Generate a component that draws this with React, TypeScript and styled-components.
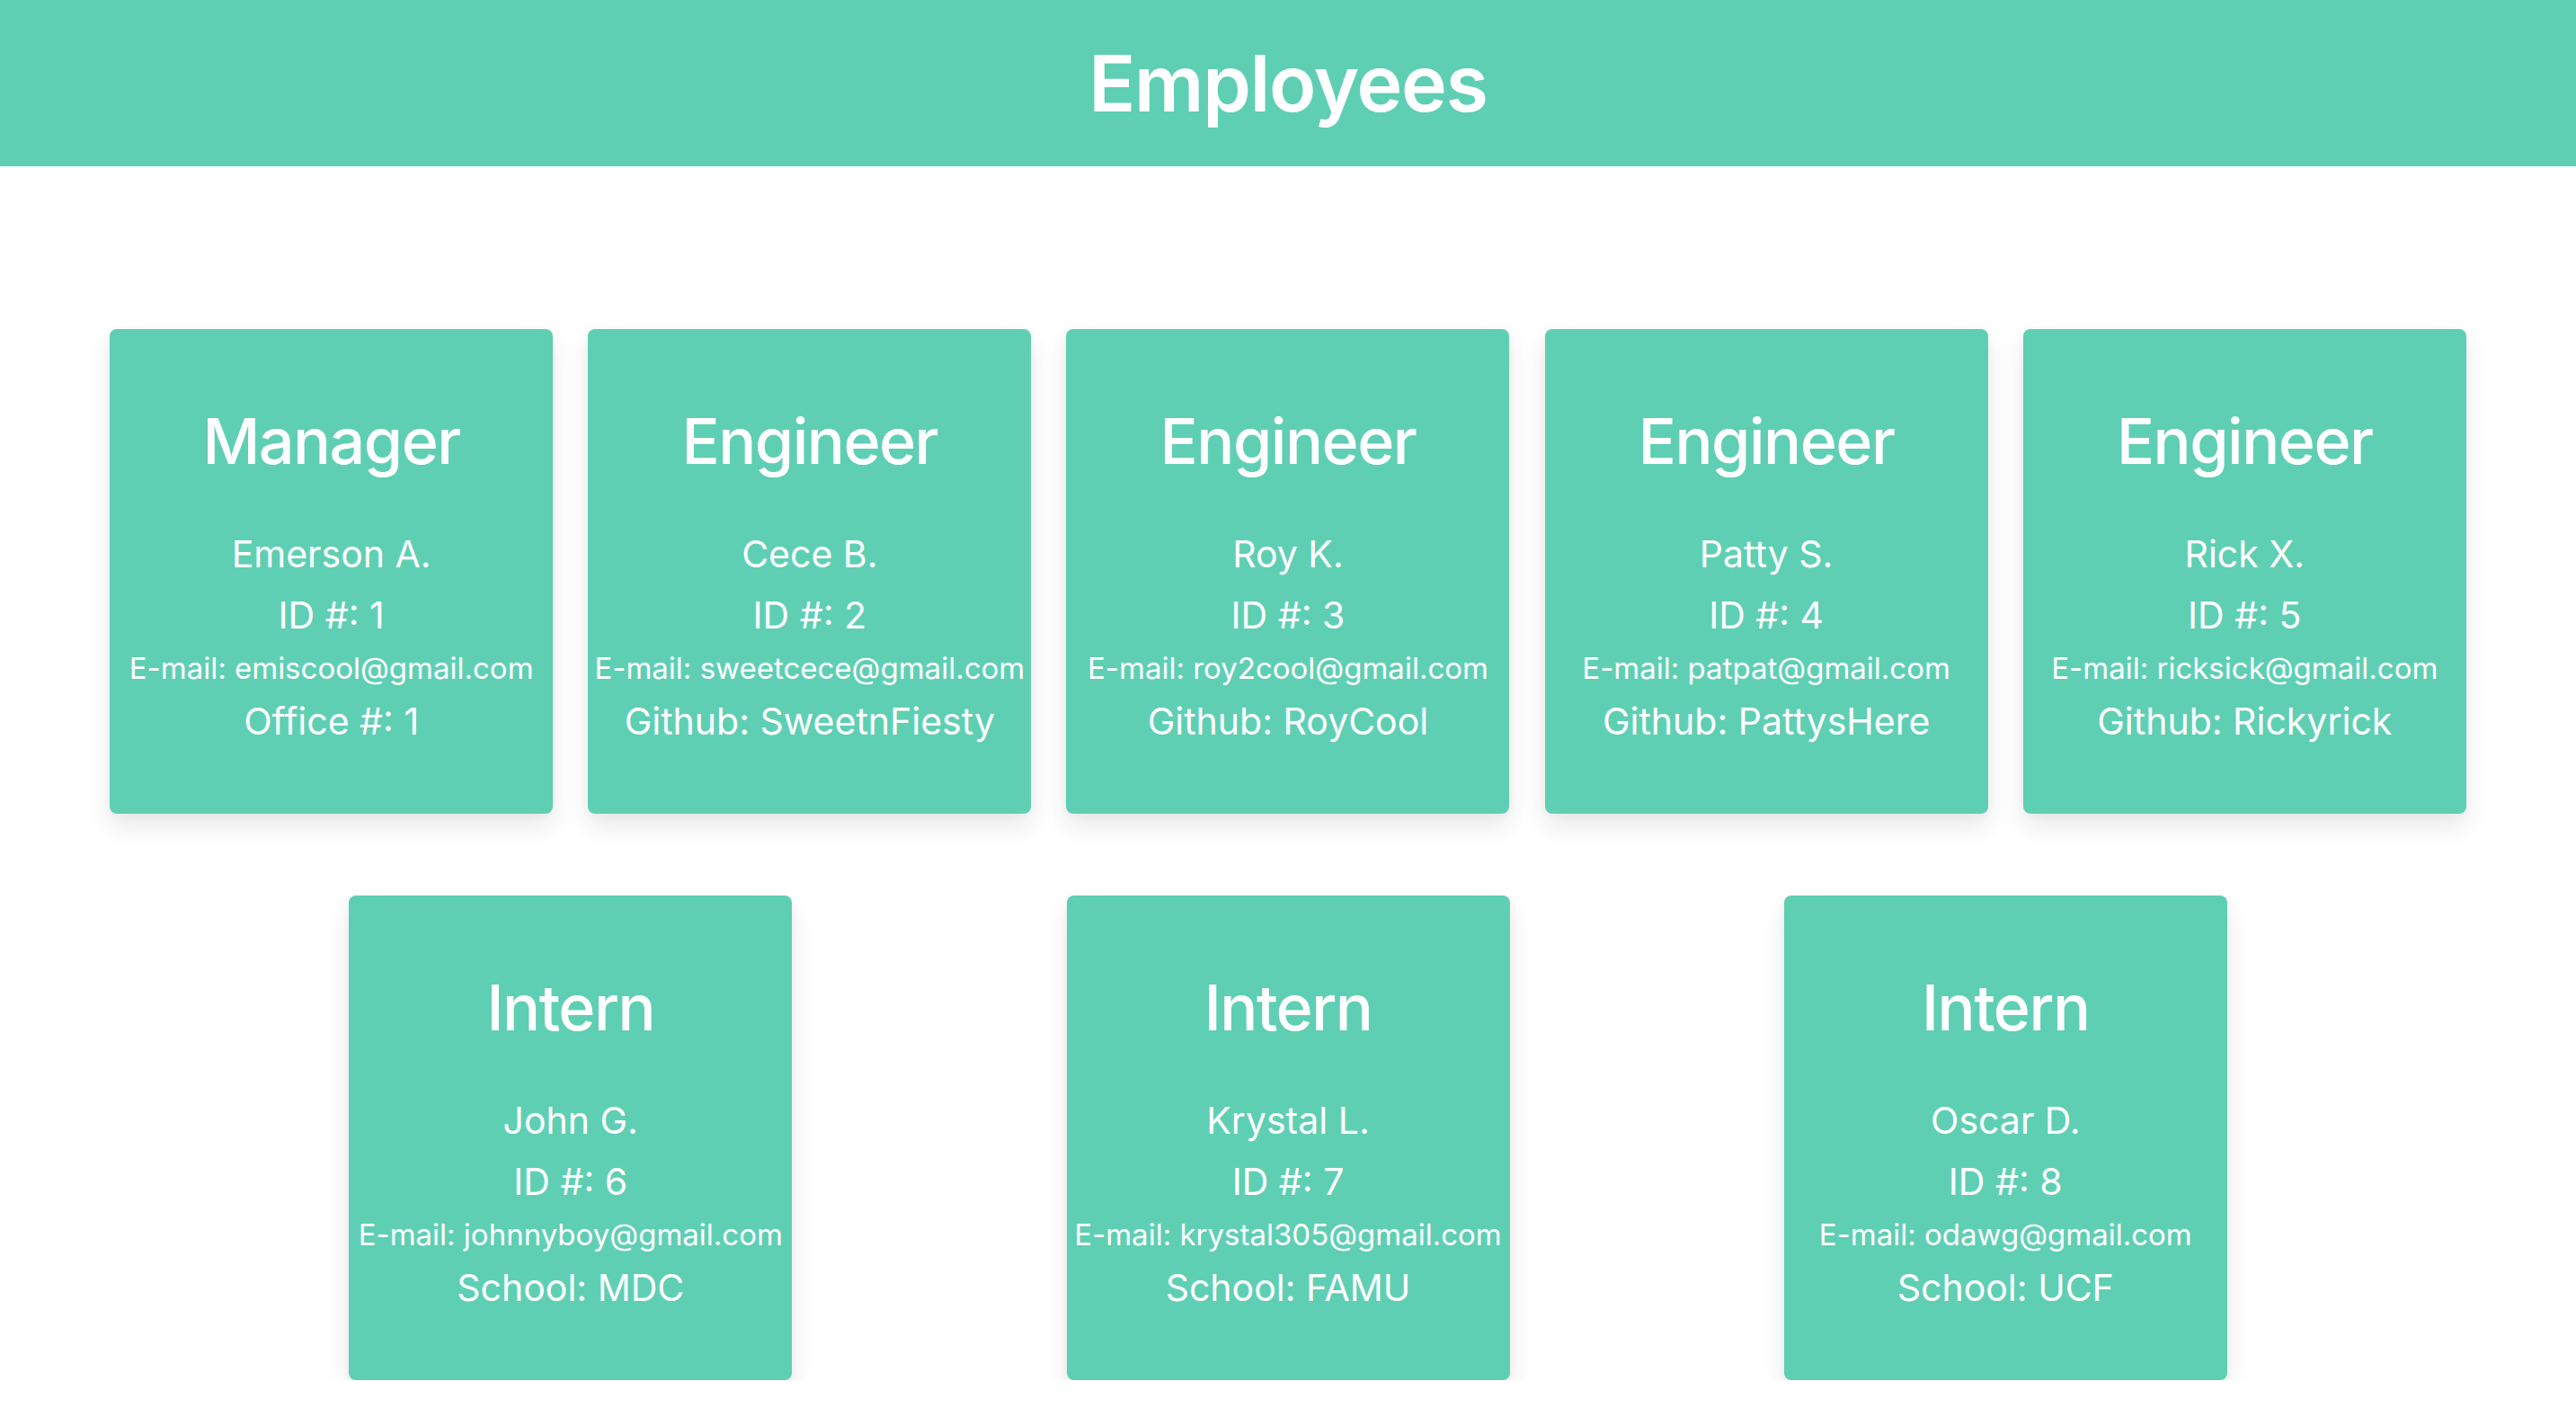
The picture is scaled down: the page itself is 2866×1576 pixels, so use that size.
import React from 'react';
import styled, { createGlobalStyle } from 'styled-components';

type Employee = {
  role: 'Manager' | 'Engineer' | 'Intern';
  name: string;
  id: number;
  email: string;
  extraLabel: string;
  extraValue: string | number;
};

const employees: Employee[] = [
  { role: 'Manager', name: 'Emerson A.', id: 1, email: 'emiscool@gmail.com', extraLabel: 'Office #', extraValue: 1 },
  { role: 'Engineer', name: 'Cece B.', id: 2, email: 'sweetcece@gmail.com', extraLabel: 'Github', extraValue: 'SweetnFiesty' },
  { role: 'Engineer', name: 'Roy K.', id: 3, email: 'roy2cool@gmail.com', extraLabel: 'Github', extraValue: 'RoyCool' },
  { role: 'Engineer', name: 'Patty S.', id: 4, email: 'patpat@gmail.com', extraLabel: 'Github', extraValue: 'PattysHere' },
  { role: 'Engineer', name: 'Rick X.', id: 5, email: 'ricksick@gmail.com', extraLabel: 'Github', extraValue: 'Rickyrick' },
  { role: 'Intern', name: 'John G.', id: 6, email: 'johnnyboy@gmail.com', extraLabel: 'School', extraValue: 'MDC' },
  { role: 'Intern', name: 'Krystal L.', id: 7, email: 'krystal305@gmail.com', extraLabel: 'School', extraValue: 'FAMU' },
  { role: 'Intern', name: 'Oscar D.', id: 8, email: 'odawg@gmail.com', extraLabel: 'School', extraValue: 'UCF' },
];

const App = () => {
  return (
    <>
      <GlobalStyle />
      <Header>
        <PageTitle>Employees</PageTitle>
      </Header>
      <CardList>
        {employees.map((emp) => (
          <Card key={emp.id}>
            <Role>{emp.role}</Role>
            <InfoLine>{emp.name}</InfoLine>
            <InfoLine>ID #: {emp.id}</InfoLine>
            <EmailLine>E-mail: {emp.email}</EmailLine>
            <InfoLine>
              {emp.extraLabel}: {emp.extraValue}
            </InfoLine>
          </Card>
        ))}
      </CardList>
    </>
  );
};

const GlobalStyle = createGlobalStyle`
  body {
    margin: 0;
    background: #ffffff;
    font-family: Inter, "Noto Sans", sans-serif;
  }
`;

const Header = styled.header`
  height: 185px;
  background: #5ecfb3;
  display: flex;
  align-items: center;
  justify-content: center;
`;

const PageTitle = styled.h1`
  margin: 0;
  font-size: 86px;
  font-weight: 600;
  letter-spacing: -1.2px;
  color: #ffffff;
`;

const CardList = styled.main`
  width: 2700px;
  margin: 0 auto;
  padding-top: 181px;
  display: flex;
  flex-wrap: wrap;
  justify-content: space-evenly;
  row-gap: 91px;
`;

const Card = styled.section`
  box-sizing: border-box;
  width: 493px;
  height: 539px;
  padding-top: 81px;
  border-radius: 8px;
  background: #5fcfb3;
  color: #ffffff;
  text-align: center;
  box-shadow: 0 14px 28px rgba(0, 0, 0, 0.09), 0 2px 10px rgba(0, 0, 0, 0.04);
`;

const Role = styled.h2`
  margin: 0 0 47px;
  font-size: 70px;
  line-height: 88px;
  font-weight: 500;
  letter-spacing: -1.5px;
`;

const InfoLine = styled.p`
  margin: 0;
  font-size: 41px;
  line-height: 68px;
  font-weight: 400;
  white-space: nowrap;
`;

const EmailLine = styled.p`
  margin: 0;
  font-size: 33px;
  line-height: 50px;
  font-weight: 400;
  white-space: nowrap;
`;

export default App;
